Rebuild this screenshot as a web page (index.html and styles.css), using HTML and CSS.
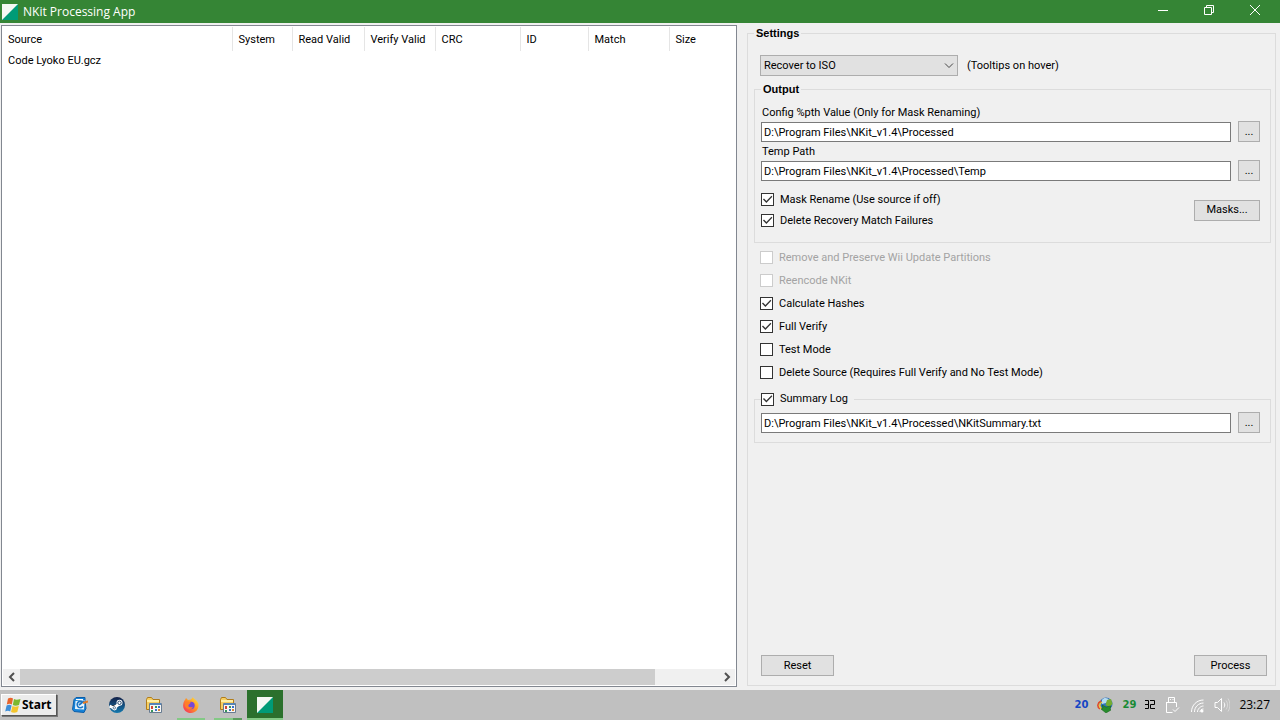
FILE: index.html
```html
<!DOCTYPE html>
<html lang="en">
<head>
    <meta charset="UTF-8">
    <meta name="viewport" content="width=device-width, initial-scale=1.0">
    <title>NKit Processing App</title>
    <link rel="stylesheet" href="styles.css">
</head>
<body>
    <!-- Title bar -->
    <header class="titlebar">
        <svg class="app-icon" viewBox="0 0 16 16"><path fill="#f4f8f4" d="M0 0h16v16H0z"/><path fill="#009b77" d="M16 0v16H0z"/></svg>
        <h1 class="title">NKit Processing App</h1>
        <button class="win-btn" aria-label="Minimize"><svg viewBox="0 0 12 12"><path d="M1 6.5h10"/></svg></button>
        <button class="win-btn" aria-label="Restore"><svg viewBox="0 0 12 12"><path d="M1.500 3.500h7v7h-7zM3.500 3V1.500h7v7H9"/></svg></button>
        <button class="win-btn" aria-label="Close"><svg viewBox="0 0 12 12"><path d="M1 1l10 10M11 1L1 11"/></svg></button>
    </header>

    <main class="content">
        <!-- File list -->
        <section class="list">
            <table class="files">
                <thead>
                    <tr>
                        <th class="col-source">Source</th>
                        <th class="col-system">System</th>
                        <th class="col-read">Read Valid</th>
                        <th class="col-verify">Verify Valid</th>
                        <th class="col-crc">CRC</th>
                        <th class="col-id">ID</th>
                        <th class="col-match">Match</th>
                        <th>Size</th>
                    </tr>
                </thead>
                <tbody>
                    <tr>
                        <td>Code Lyoko EU.gcz</td>
                        <td></td><td></td><td></td><td></td><td></td><td></td><td></td>
                    </tr>
                </tbody>
            </table>
            <div class="scrollbar">
                <button class="scroll-btn" aria-label="Scroll left"><svg viewBox="0 0 8 10"><path d="M6 1L2 5l4 4"/></svg></button>
                <div class="track"><div class="thumb"></div></div>
                <button class="scroll-btn" aria-label="Scroll right"><svg viewBox="0 0 8 10"><path d="M2 1l4 4-4 4"/></svg></button>
            </div>
        </section>

        <!-- Settings -->
        <fieldset class="group settings">
            <legend class="legend">Settings</legend>
            <div class="mode-row">
                <div class="select-box">
                    <select class="mode" id="mode" aria-labelledby="mode-hint">
                        <option>Recover to ISO</option>
                    </select>
                    <svg class="chevron" viewBox="0 0 10 6"><path d="M1 .5l4 4 4-4"/></svg>
                </div>
                <label id="mode-hint" for="mode">(Tooltips on hover)</label>
            </div>

            <fieldset class="group output">
                <legend class="legend">Output</legend>
                <label class="caption" for="config-path">Config %pth Value (Only for Mask Renaming)</label>
                <div class="path-row">
                    <input class="path" type="text" id="config-path" value="D:\Program Files\NKit_v1.4\Processed">
                    <button class="btn browse">...</button>
                </div>
                <label class="caption second" for="temp-path">Temp Path</label>
                <div class="path-row">
                    <input class="path" type="text" id="temp-path" value="D:\Program Files\NKit_v1.4\Processed\Temp">
                    <button class="btn browse">...</button>
                </div>
                <div class="mask-row">
                    <div>
                        <label class="check tight"><input type="checkbox" checked>Mask Rename (Use source if off)</label>
                        <label class="check tight"><input type="checkbox" checked>Delete Recovery Match Failures</label>
                    </div>
                    <button class="btn masks">Masks...</button>
                </div>
            </fieldset>

            <div class="options">
                <label class="check disabled"><input type="checkbox" disabled>Remove and Preserve Wii Update Partitions</label>
                <label class="check disabled"><input type="checkbox" disabled>Reencode NKit</label>
                <label class="check"><input type="checkbox" checked>Calculate Hashes</label>
                <label class="check"><input type="checkbox" checked>Full Verify</label>
                <label class="check"><input type="checkbox">Test Mode</label>
                <label class="check"><input type="checkbox">Delete Source (Requires Full Verify and No Test Mode)</label>
            </div>

            <fieldset class="group summary">
                <legend class="summary-legend"><label class="check"><input type="checkbox" checked>Summary Log</label></legend>
                <div class="path-row">
                    <input class="path" type="text" aria-label="Summary log path" value="D:\Program Files\NKit_v1.4\Processed\NKitSummary.txt">
                    <button class="btn browse">...</button>
                </div>
            </fieldset>

            <div class="actions">
                <button class="btn action">Reset</button>
                <button class="btn action">Process</button>
            </div>
        </fieldset>
    </main>

    <!-- Taskbar -->
    <footer class="taskbar">
        <button class="start">
            <svg viewBox="0 0 16 16">
                <path fill="#e8642c" d="M3 1.500c2-1 3.500-1 5 0L6.800 7.500c-1.600-1-3-1-5 0z"/>
                <path fill="#7cb82f" d="M9 2c1.700 1 3.800.8 6.500 0l-1.500 6c-2.500.9-4.300.9-6.200 0z"/>
                <path fill="#3f8fd8" d="M1.600 8.400c2-1 3.300-1 5 0l-1.400 6c-1.500-1-3-1-5 0z"/>
                <path fill="#f3c52c" d="M7.500 9c1.900 1 3.800.8 6.300 0l-1.500 6c-2.300.9-4.300.9-6.300 0z"/>
            </svg>
            Start
        </button>
        <nav class="tasks">
            <button class="task" aria-label="Mail">
                <svg viewBox="0 0 16 16"><path fill="#1683d8" stroke="#0c5da8" d="M2 2.500L4 .5h9v3l1 8-2 4-10-1-1.500-2z"/><path fill="#e9f6ff" d="M3.500 4l9-1-.5 9.500-9-.5z"/><path fill="none" stroke="#1b75c4" stroke-width="1.700" d="M10 4.500c-4-1-5.500 2-4.500 4.500s4 2 5.500.5M7 8l5-4"/><path stroke="#e37b27" stroke-width="2" d="M11 6l5-1.500"/><path stroke="#fff" d="M4 2.500h7"/></svg>
            </button>
            <button class="task" aria-label="Steam">
                <svg viewBox="0 0 16 16"><defs><linearGradient id="steam" x2="0" y2="1"><stop stop-color="#132048"/><stop offset="1" stop-color="#1479af"/></linearGradient></defs><circle cx="8" cy="8" r="8" fill="url(#steam)"/><path stroke="#fff" stroke-width="3" d="M.5 9L5 11l5-4"/><circle cx="10.500" cy="5.800" r="3" fill="#fff"/><circle cx="10.500" cy="5.800" r="1.700" fill="#fff" stroke="#23466d"/><circle cx="5.500" cy="11" r="2.400" fill="#fff"/><circle cx="5.300" cy="10.800" r="1.200" fill="none" stroke="#23466d" stroke-width=".7"/></svg>
            </button>
            <button class="task" aria-label="Program folder">
                <svg viewBox="0 0 16 16"><path fill="#f6cf62" stroke="#b07c1b" d="M.5 2.500l1-2h4l1.500 2h6.500v10h-13z"/><path fill="#fff0a6" d="M1 3h12v2H1z"/><path fill="#f7f7f5" stroke="#677b91" d="M3.500 6.500h12v9h-12z"/><path fill="#5584b7" d="M4 6h11v2H4z"/><path fill="#ce4937" d="M5 9h2v3H5z"/><path fill="#37965a" d="M9 9h2v2H9zM5 13h2v2H5z"/><path fill="#396fca" d="M12 9h2v2h-2zM9 12h2v2H9z"/><path fill="#dd8435" d="M12 12h2v2h-2z"/></svg>
            </button>
            <button class="task open" aria-label="Firefox">
                <svg viewBox="0 0 16 16"><defs><linearGradient id="fox" x1="1" x2="0" y2="1"><stop stop-color="#fff04a"/><stop offset=".45" stop-color="#ff9822"/><stop offset="1" stop-color="#f52266"/></linearGradient></defs><path fill="url(#fox)" d="M2 3l1-2 2 2 3-.5L10 0c0 2 4 2.500 5.500 7C16 12 13 16 8 16S-.5 12 .2 7.500C.5 5.500 1 4 2 3z"/><circle cx="8" cy="8.500" r="3.700" fill="#7549d8"/><path fill="#ff7e27" d="M2 5c3-1 4 0 6 .5L6.500 7C4 9 6 11 10 10c-2 4-7 2-8-1z"/></svg>
            </button>
            <button class="task open grouped" aria-label="Program folder windows">
                <svg viewBox="0 0 16 16"><path fill="#f6cf62" stroke="#b07c1b" d="M.5 2.500l1-2h4l1.500 2h6.500v10h-13z"/><path fill="#fff0a6" d="M1 3h12v2H1z"/><path fill="#f7f7f5" stroke="#677b91" d="M3.500 6.500h12v9h-12z"/><path fill="#5584b7" d="M4 6h11v2H4z"/><path fill="#ce4937" d="M5 9h2v3H5z"/><path fill="#37965a" d="M9 9h2v2H9zM5 13h2v2H5z"/><path fill="#396fca" d="M12 9h2v2h-2zM9 12h2v2H9z"/><path fill="#dd8435" d="M12 12h2v2h-2z"/></svg>
            </button>
            <button class="task active" aria-label="NKit Processing App">
                <svg viewBox="0 0 16 16"><path fill="#f4f8f4" d="M0 0h16v16H0z"/><path fill="#009b77" d="M16 0v16H0z"/></svg>
            </button>
        </nav>
        <div class="tray">
            <span class="temp cpu">20</span>
            <svg viewBox="0 0 16 16"><circle cx="9" cy="7" r="6.500" fill="#3273bd"/><path fill="#b7dcf2" d="M5 3c2-3 6-2 7 0l-3 3-4 1z"/><path fill="#75ad31" d="M10 3l4-1 1.500 5-3 3-4-2z"/><path fill="none" stroke="#e24b24" stroke-width="1.500" d="M4 4C0 6 0 10 3 12"/><path fill="none" stroke="#f4cb2d" stroke-width="1.500" d="M5 5c-3 2-3 5 0 7"/><path fill="#278b2c" stroke="#126016" stroke-width=".5" d="M5 8l4 2 5-1-1 3 1 1-5 3-5-4 2-1z"/></svg>
            <span class="temp gpu">29</span>
            <svg class="seg" viewBox="0 0 10 10"><path d="M0 .5h3.500v8H0M0 4.500h3.500M5 .5h4.500v4h-4v4H10"/></svg>
            <svg class="line usb" viewBox="0 0 16 18"><path d="M4.500 6V1.500h6V6M2.500 6.500h10V11M2.500 6v10.500h6M6 3.500h1M8.500 3.500h1M9 13.500l2 2 4-4"/></svg>
            <svg class="line wifi" viewBox="0 0 16 16"><path d="M2.500 15C2.500 8 8 3 14.500 3M5.500 15c0-5 4-9 9-9M8.500 15c0-3 3-6 6-6M11 15c0-2 1.500-3 3.500-3"/><circle cx="13" cy="14" r="1.500" fill="#fff" stroke="none"/></svg>
            <svg class="line" viewBox="0 0 16 16"><path d="M1 5.500h2.500l4-4v13l-4-4H1zM10 5.500c1 1.500 1 3.500 0 5"/><path opacity=".4" d="M12 3.500c2 2.500 2 6.500 0 9M14 1.500c2.500 4 2.500 9 0 13"/></svg>
            <time class="clock">23:27</time>
        </div>
    </footer>
</body>
</html>
```

FILE: styles.css
```css
* {
    box-sizing: border-box;
}
body {
    margin: 0;
    min-height: 100vh;
    display: flex;
    flex-direction: column;
    background-color: #f0f0f0;
    color: #000;
    font-family: Roboto, "Liberation Sans", sans-serif;
    font-size: 11px;
    line-height: 16px;
}
button, input, select {
    font: inherit;
    color: inherit;
    margin: 0;
    padding: 0;
    border-radius: 0;
}
svg {
    display: block;
}

/* Title bar */
.titlebar {
    display: flex;
    align-items: center;
    height: 23px;
    padding: 0 2px;
    background-color: #358535;
    color: #fff;
}
.app-icon {
    width: 16px;
    height: 16px;
}
.title {
    flex: 1;
    margin: 0;
    padding-left: 5px;
    font: 12px/16px "Open Sans", sans-serif;
}
.win-btn {
    display: flex;
    align-items: center;
    justify-content: center;
    width: 46px;
    height: 23px;
    padding-bottom: 3px;
    border: none;
    background: none;
}
.win-btn svg {
    width: 12px;
    height: 12px;
    fill: none;
    stroke: #fff;
}

.content {
    flex: 1;
    display: grid;
    grid-template-columns: 736fr 529fr;
    gap: 10px;
    padding: 2px 4px 3px 1px;
}

/* File list */
.list {
    display: flex;
    flex-direction: column;
    justify-content: space-between;
    padding-top: 1px;
    border: 1px solid #828790;
    background-color: #fff;
}
.files {
    width: 100%;
    table-layout: fixed;
    border-collapse: collapse;
}
.files th {
    height: 24px;
    padding: 1px 6px 0;
    border-right: 1px solid #e5e5e5;
    font-weight: normal;
    text-align: left;
    white-space: nowrap;
}
.files th:last-child {
    border-right: none;
}
.files td {
    height: 18px;
    padding: 1px 6px 0;
}
.col-source { width: 230px; }
.col-system { width: 60px; }
.col-read { width: 72px; }
.col-verify { width: 71px; }
.col-crc { width: 85px; }
.col-id { width: 68px; }
.col-match { width: 81px; }

.scrollbar {
    display: flex;
    height: 16px;
    margin: 0 1px 1px;
    background-color: #f0f0f0;
}
.scroll-btn {
    display: flex;
    align-items: center;
    justify-content: center;
    width: 17px;
    border: none;
    background: none;
}
.scroll-btn svg {
    width: 8px;
    height: 10px;
    fill: none;
    stroke: #505050;
    stroke-width: 2;
}
.track {
    flex: 1;
}
.thumb {
    width: 91%;
    height: 100%;
    background-color: #cdcdcd;
}

/* Group boxes */
.group {
    min-width: 0;
    margin: 0;
    border: 1px solid #dcdcdc;
}
.legend {
    padding: 0 2px;
    font-family: "Liberation Sans", Arial, sans-serif;
    font-weight: bold;
}
.settings {
    display: flex;
    flex-direction: column;
    margin: 0 0 1px;
    padding: 14px 4px 9px 6px;
}
.output {
    margin-top: 5px;
    padding: 8px 10px 11px 6px;
}
.summary {
    margin-top: 7px;
    padding: 5px 10px 9px 6px;
}
.summary-legend {
    padding: 0 6px 0 0;
}
.summary-legend .check {
    height: 16px;
}

/* Controls */
.mode-row {
    display: flex;
    align-items: center;
    gap: 9px;
    padding-left: 6px;
}
.select-box {
    display: grid;
    align-items: center;
    width: 198px;
}
.mode {
    grid-area: 1 / 1;
    height: 21px;
    padding-left: 3px;
    border: 1px solid #adadad;
    background-color: #e1e1e1;
    appearance: none;
}
.chevron {
    grid-area: 1 / 1;
    justify-self: end;
    width: 10px;
    height: 6px;
    margin-right: 4px;
    fill: none;
    stroke: #444;
    pointer-events: none;
}
.caption {
    display: block;
    padding-left: 1px;
}
.second {
    margin-top: 2px;
}
.path-row {
    display: flex;
    align-items: flex-end;
    gap: 7px;
}
.path {
    flex: 1;
    min-width: 0;
    height: 20px;
    padding: 0 2px;
    border: 1px solid #7a7a7a;
    background-color: #fff;
}
.btn {
    height: 21px;
    border: 1px solid #adadad;
    background-color: #e1e1e1;
}
.browse {
    width: 22px;
}
.masks {
    width: 66px;
}
.action {
    width: 73px;
}
.mask-row {
    display: flex;
    align-items: center;
    justify-content: space-between;
    margin-top: 8px;
}
.options {
    padding: 3px 0 0 6px;
}
.check {
    display: flex;
    align-items: center;
    gap: 6px;
    height: 23px;
}
.tight {
    height: 21px;
}
.check input {
    display: grid;
    width: 13px;
    height: 13px;
    border: 1px solid #333;
    background-color: #fff;
    appearance: none;
}
.check input:checked::before {
    content: "";
    background-color: #333;
    clip-path: polygon(9% 50%, 18% 42%, 40% 64%, 86% 16%, 94% 26%, 40% 82%);
}
.disabled {
    color: #a3a3a3;
}
.check input:disabled {
    border-color: #ccc;
}
.actions {
    display: flex;
    justify-content: space-between;
    margin-top: auto;
    padding: 0 4px 0 7px;
}

/* Taskbar */
.taskbar {
    display: flex;
    align-items: center;
    height: 30px;
    padding: 0 10px 0 1px;
    background-color: #c0c0c0;
}
.start {
    display: flex;
    align-items: center;
    gap: 1px;
    width: 56px;
    height: 22px;
    padding-left: 3px;
    border: 1px solid;
    border-color: #fff #555 #555 #fff;
    background-color: #ececec;
    box-shadow: 1px 1px 0 #777;
    font: bold 12px/14px "Noto Sans", sans-serif;
}
.start svg {
    width: 16px;
    height: 16px;
}
.tasks {
    display: flex;
    gap: 1px;
    padding-left: 5px;
}
.task {
    display: flex;
    align-items: center;
    justify-content: center;
    width: 36px;
    height: 30px;
    border: none;
    background: none;
}
.task svg {
    width: 16px;
    height: 16px;
}
.open {
    background: linear-gradient(#83c985, #83c985) bottom / 28px 2px no-repeat;
}
.grouped {
    background: linear-gradient(90deg, #83c985 19px, #5b9c5d 19px) bottom / 28px 2px no-repeat;
}
.active {
    background-color: #2b702d;
    box-shadow: inset 0 -2px 0 #83c985;
}
.tray {
    display: flex;
    align-items: center;
    gap: 9px;
    margin-left: auto;
}
.tray svg {
    width: 16px;
    height: 16px;
}
.temp {
    font: bold 10px/14px "DejaVu Sans", sans-serif;
}
.cpu {
    color: #1545c4;
}
.gpu {
    color: #198a35;
}
.tray .seg {
    width: 10px;
    height: 10px;
    fill: none;
    stroke: #000;
}
.line {
    fill: none;
    stroke: #fff;
}
.tray .usb {
    height: 18px;
}
.clock {
    font: 12px/16px "Open Sans", sans-serif;
}
```
